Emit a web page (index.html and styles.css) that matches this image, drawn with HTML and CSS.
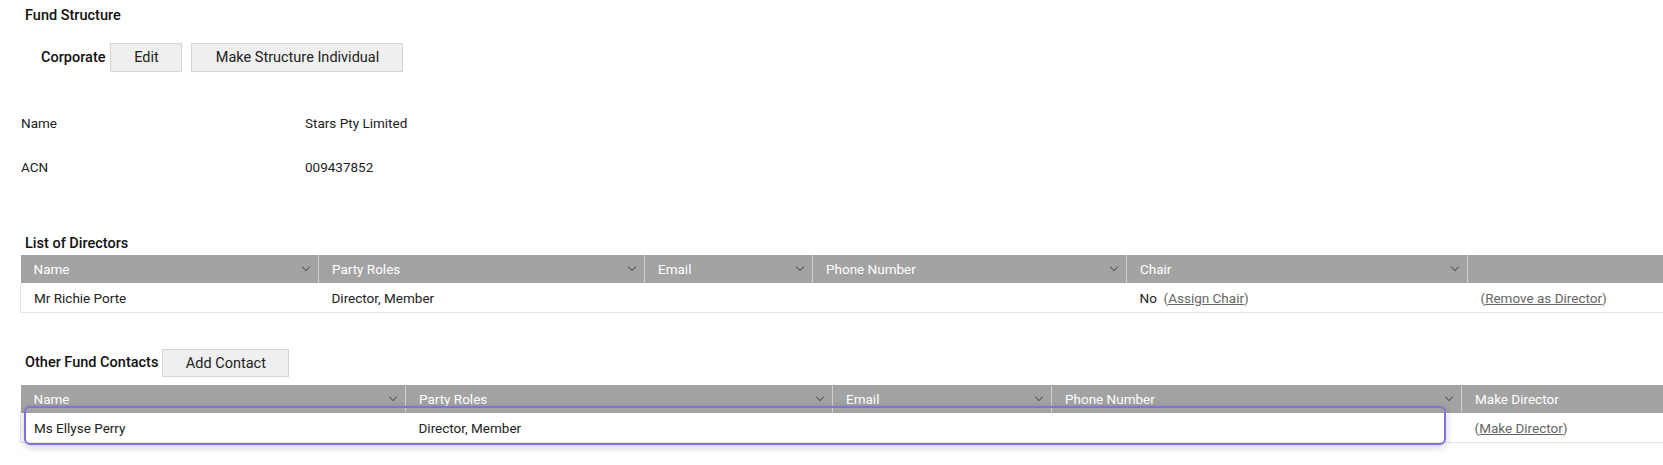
FILE: index.html
```html
<!DOCTYPE html>
<html>
<head>
<meta charset="utf-8">
<link rel="stylesheet" href="styles.css">
</head>
<body>
<div class="page">
  <h2 class="section-title">Fund Structure</h2>
  <div class="structure-row">
    <span class="structure-type">Corporate</span>
    <button class="btn btn-edit">Edit</button>
    <button class="btn btn-wide">Make Structure Individual</button>
  </div>

  <div class="details">
    <div class="detail-label">Name</div>
    <div class="detail-value">Stars Pty Limited</div>
    <div class="detail-label">ACN</div>
    <div class="detail-value">009437852</div>
  </div>

  <h3 class="list-title">List of Directors</h3>
  <table class="grid grid-directors">
    <colgroup>
      <col class="c-d1"><col class="c-d2"><col class="c-d3"><col class="c-d4"><col class="c-d5"><col>
    </colgroup>
    <thead>
      <tr>
        <th><span class="th-label">Name</span><span class="chev"></span></th>
        <th><span class="th-label">Party Roles</span><span class="chev"></span></th>
        <th><span class="th-label">Email</span><span class="chev"></span></th>
        <th><span class="th-label">Phone Number</span><span class="chev"></span></th>
        <th><span class="th-label">Chair</span><span class="chev"></span></th>
        <th></th>
      </tr>
    </thead>
    <tbody>
      <tr>
        <td>Mr Richie Porte</td>
        <td>Director, Member</td>
        <td></td>
        <td></td>
        <td>No&nbsp; <span class="action">(<a href="#">Assign Chair</a>)</span></td>
        <td><span class="action">(<a href="#">Remove as Director</a>)</span></td>
      </tr>
    </tbody>
  </table>

  <div class="contacts-head">
    <h3 class="list-title inline">Other Fund Contacts</h3>
    <button class="btn btn-add">Add Contact</button>
  </div>
  <div class="grid-wrap">
    <table class="grid grid-contacts">
      <colgroup>
        <col class="c-c1"><col class="c-c2"><col class="c-c3"><col class="c-c4"><col>
      </colgroup>
      <thead>
        <tr>
          <th><span class="th-label">Name</span><span class="chev"></span></th>
          <th><span class="th-label">Party Roles</span><span class="chev"></span></th>
          <th><span class="th-label">Email</span><span class="chev"></span></th>
          <th><span class="th-label">Phone Number</span><span class="chev"></span></th>
          <th><span class="th-label">Make Director</span></th>
        </tr>
      </thead>
      <tbody>
        <tr>
          <td>Ms Ellyse Perry</td>
          <td>Director, Member</td>
          <td></td>
          <td></td>
          <td><span class="action">(<a href="#">Make Director</a>)</span></td>
        </tr>
      </tbody>
    </table>
    <div class="focus-ring"></div>
  </div>
</div>
</body>
</html>
```

FILE: styles.css
```css
html {
  margin: 0;
  padding: 0;
  background: #ffffff;
  overflow: hidden;
}

body {
  margin: 0;
  padding: 0;
  font-family: Roboto, "Liberation Sans", Arial, sans-serif;
  font-size: 13.5px;
  color: #222222;
}

.page {
  padding: 8px 0 30px 0;
}

.section-title {
  margin: 0 0 0 25px;
  font-size: 14.5px;
  font-weight: 500;
  line-height: 16px;
  color: #111;
}

.structure-row {
  display: flex;
  align-items: center;
  margin: 19px 0 0 41px;
}

.structure-type {
  font-size: 14.5px;
  font-weight: 500;
  color: #111;
  margin-right: 5px;
}

.btn {
  font-family: Roboto, "Liberation Sans", Arial, sans-serif;
  font-size: 14.5px;
  color: #222;
  background: #efefef;
  border: 1px solid #d6d6d6;
  border-radius: 0;
  height: 29px;
  padding: 0;
  cursor: pointer;
}

.btn-edit {
  width: 72px;
  margin-right: 9px;
}

.btn-wide {
  width: 212px;
}

.btn-add {
  width: 127px;
  height: 28px;
  margin-left: 4px;
}

.details {
  display: grid;
  grid-template-columns: 284px auto;
  row-gap: 28px;
  margin: 43px 0 0 21px;
  line-height: 16px;
}

.list-title {
  margin: 61px 0 0 25px;
  font-size: 14.5px;
  font-weight: 500;
  line-height: 16px;
  color: #111;
}

.list-title.inline {
  margin: 0;
}

.grid {
  border-collapse: collapse;
  table-layout: fixed;
  width: 1643px;
  margin-left: 20px;
}

.grid-directors {
  margin-top: 3px;
}

.c-d1 { width: 298px; }
.c-d2 { width: 326px; }
.c-d3 { width: 168px; }
.c-d4 { width: 314px; }
.c-d5 { width: 341px; }

.c-c1 { width: 385px; }
.c-c2 { width: 427px; }
.c-c3 { width: 219px; }
.c-c4 { width: 410px; }

.grid th {
  position: relative;
  height: 28px;
  padding: 0 0 0 13px;
  background: #a3a3a3;
  color: #ffffff;
  font-weight: 400;
  font-size: 13.5px;
  text-align: left;
  border-left: 1px solid #cfcfcf;
  white-space: nowrap;
}

.grid th:first-child {
  border-left: none;
}

.grid td {
  height: 29px;
  padding: 0 0 0 13px;
  border-bottom: 1px solid #e3e3e3;
  white-space: nowrap;
  color: #222;
}

.grid td:first-child {
  border-left: 1px solid #e3e3e3;
}

.action {
  color: #666;
}

.action a {
  color: #666;
  text-decoration: underline;
}

.chev {
  position: absolute;
  right: 9px;
  top: 9px;
  width: 5px;
  height: 5px;
  border-right: 1.5px solid #5a5a5a;
  border-bottom: 1.5px solid #5a5a5a;
  transform: rotate(45deg);
}

.contacts-head {
  display: flex;
  align-items: center;
  margin: 36px 0 0 25px;
}

.grid-wrap {
  position: relative;
  margin-top: 8px;
}

.focus-ring {
  position: absolute;
  left: 24px;
  top: 21px;
  width: 1418px;
  height: 35px;
  border: 2px solid #8070e2;
  border-radius: 6px;
  box-shadow: 0 2px 8px rgba(0, 0, 0, 0.2);
  pointer-events: none;
}
```
